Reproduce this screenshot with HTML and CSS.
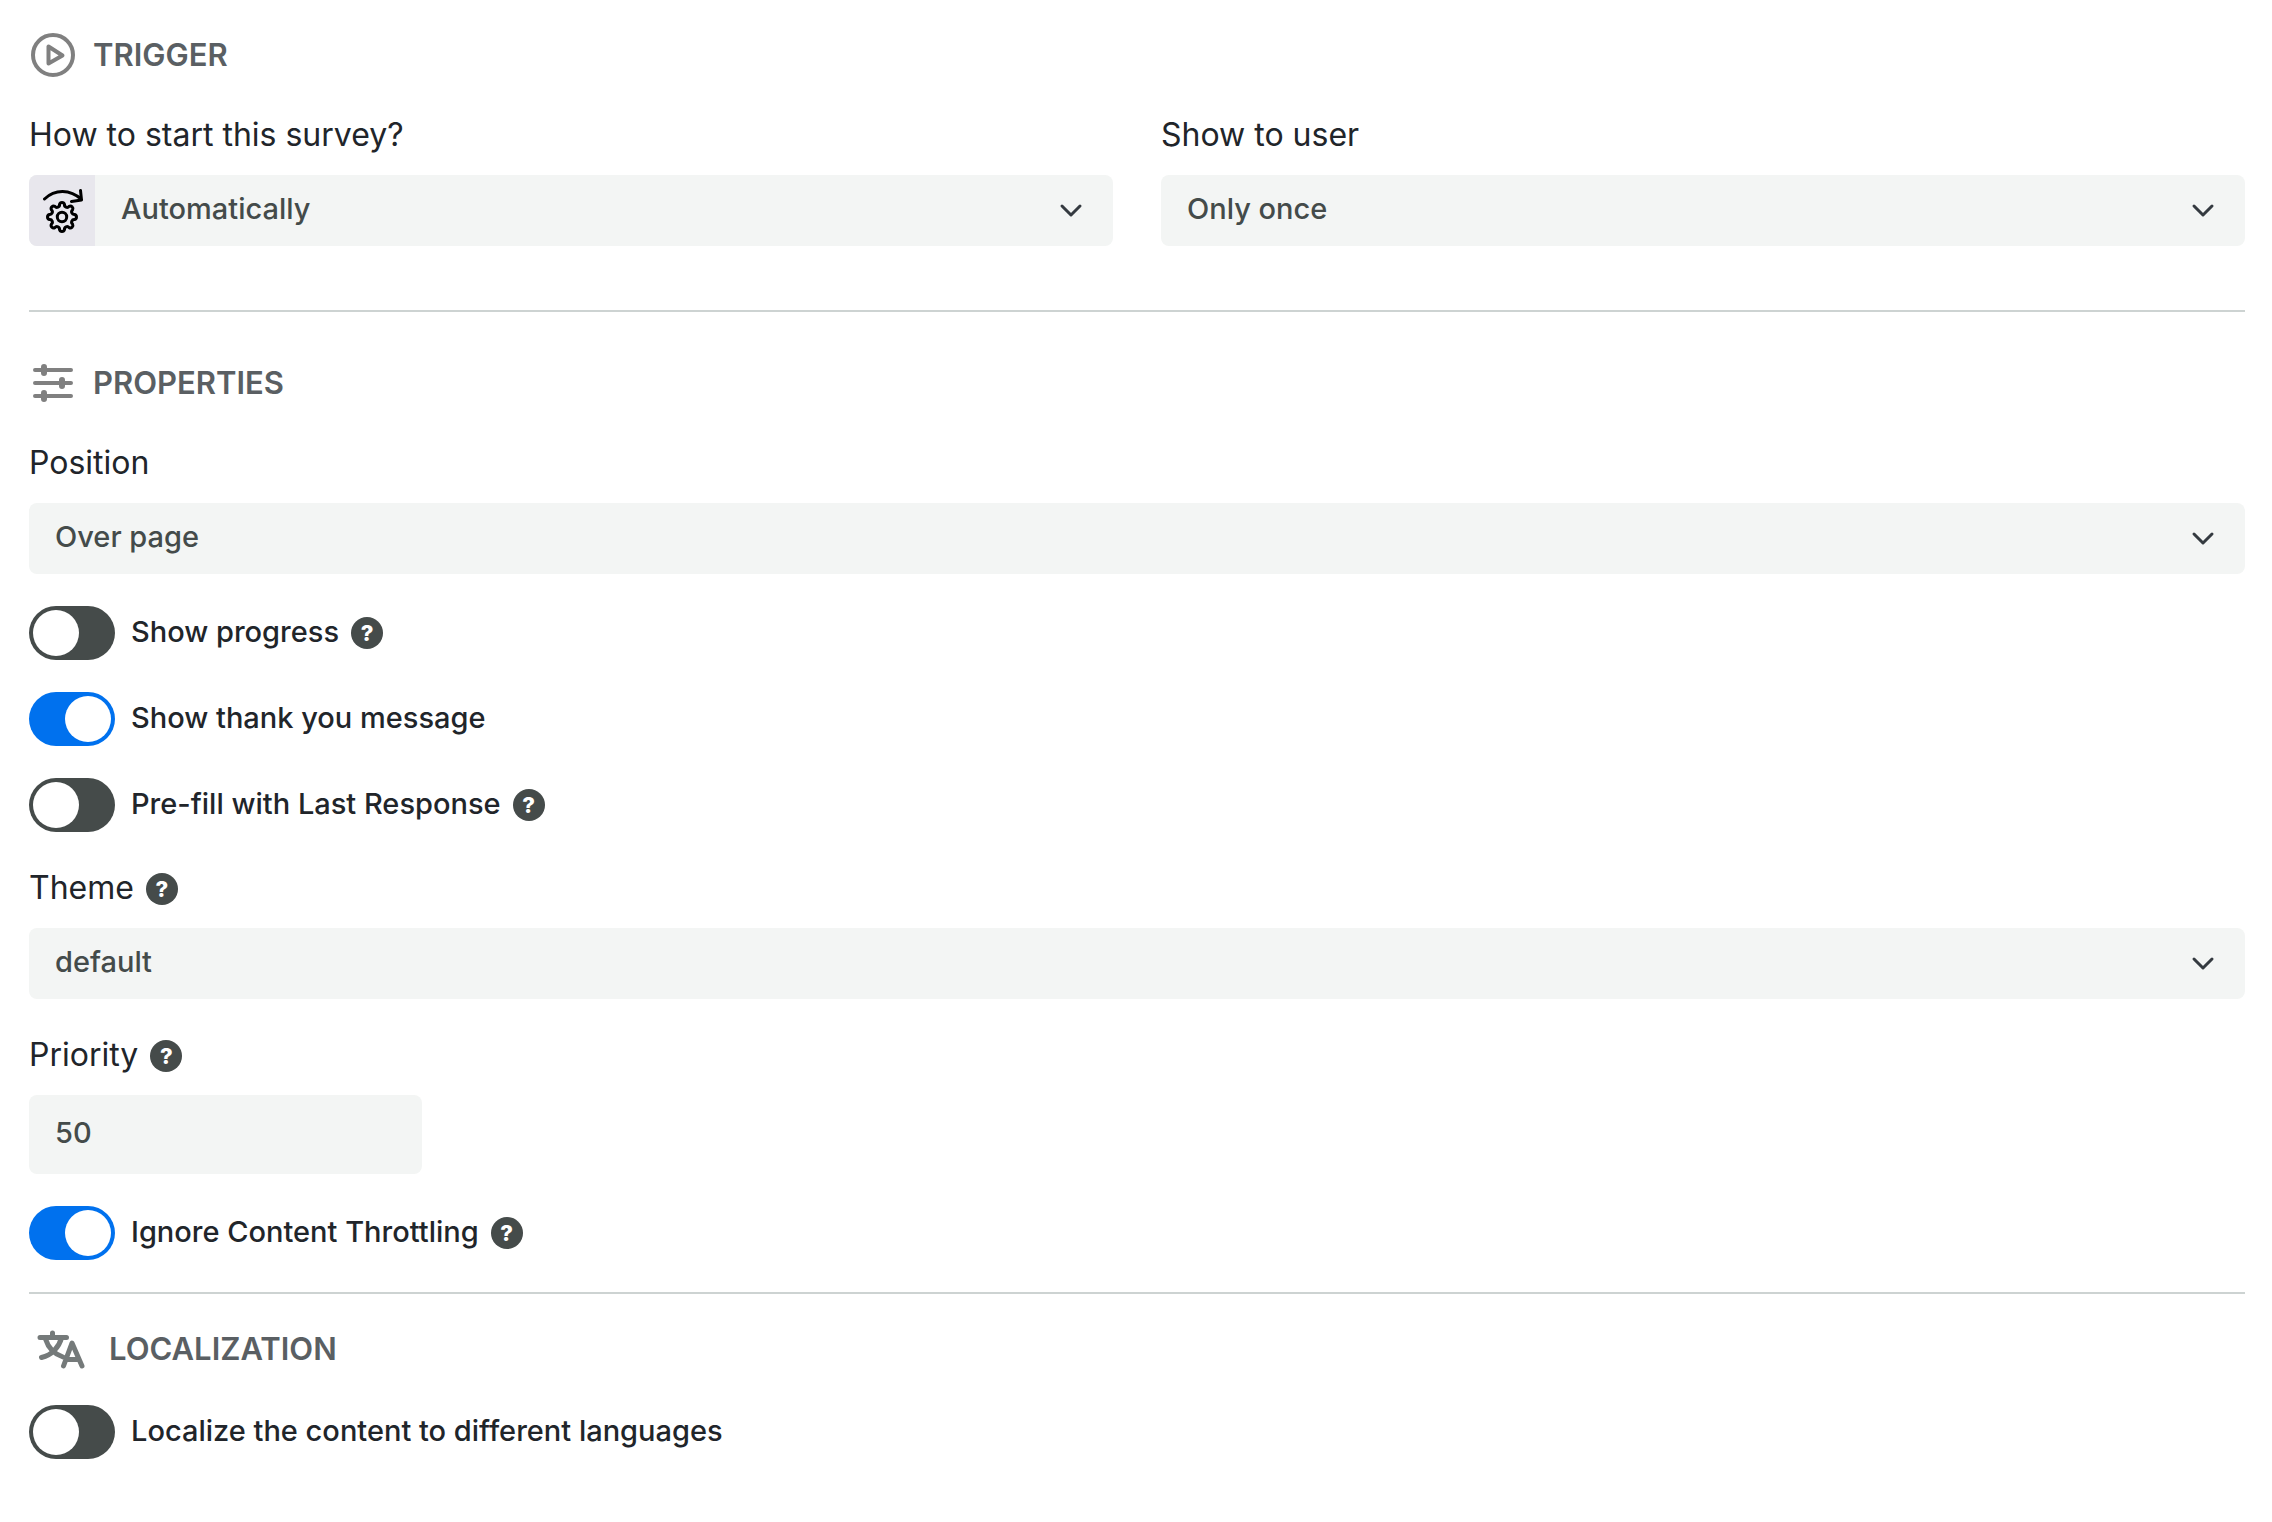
FILE: index.html
```html
<!DOCTYPE html>
<html lang="en">
<head>
    <meta charset="UTF-8">
    <meta name="viewport" content="width=device-width, initial-scale=1.0">
    <title>Survey settings</title>
    <link rel="stylesheet" href="styles.css">
</head>
<body>
    <form class="settings">
        <section class="section trigger">
            <h2 class="section-title">
                <svg class="title-icon" viewBox="11 13 44 44" aria-hidden="true">
                    <circle cx="33" cy="35" r="20"/>
                    <path d="M28.5 26.5v17l14-8z"/>
                </svg>
                <span>Trigger</span>
            </h2>
            <div class="columns">
                <div class="field">
                    <div class="field-label"><label for="startMode">How to start this survey?</label></div>
                    <div class="select-box">
                        <span class="select-prefix">
                            <svg viewBox="21 16 42 48" aria-hidden="true">
                                <path d="M24.5 28C35 18 50 18 61.5 28.5M60.5 19.5l1 9.5-10 1.5"/>
                                <circle cx="42" cy="46" r="4.7"/>
                                <path d="M54.6 48.5A2.6 2.6 0 0 0 52.6 53.1A2.6 2.6 0 0 1 49.1 56.6A2.6 2.6 0 0 0 44.5 58.6A2.6 2.6 0 0 1 39.5 58.6A2.6 2.6 0 0 0 34.9 56.6A2.6 2.6 0 0 1 31.4 53.1A2.6 2.6 0 0 0 29.4 48.5A2.6 2.6 0 0 1 29.4 43.5A2.6 2.6 0 0 0 31.4 38.9A2.6 2.6 0 0 1 34.9 35.4A2.6 2.6 0 0 0 39.5 33.4A2.6 2.6 0 0 1 44.5 33.4A2.6 2.6 0 0 0 49.1 35.4A2.6 2.6 0 0 1 52.6 38.9A2.6 2.6 0 0 0 54.6 43.5A2.6 2.6 0 0 1 54.6 48.5z"/>
                            </svg>
                        </span>
                        <select id="startMode">
                            <option>Automatically</option>
                        </select>
                        <svg class="chevron" viewBox="0 0 24 24" aria-hidden="true"><path d="M3 8l9 9 9-9"/></svg>
                    </div>
                </div>
                <div class="field">
                    <div class="field-label"><label for="frequency">Show to user</label></div>
                    <div class="select-box">
                        <select id="frequency">
                            <option>Only once</option>
                        </select>
                        <svg class="chevron" viewBox="0 0 24 24" aria-hidden="true"><path d="M3 8l9 9 9-9"/></svg>
                    </div>
                </div>
            </div>
        </section>

        <section class="section properties">
            <h2 class="section-title">
                <svg class="title-icon" viewBox="11 11 44 44" aria-hidden="true">
                    <path d="M15 20h36M15 33h36M15 46h36"/>
                    <path class="knob" d="M24 17v6M42 30v6M24 43v6"/>
                </svg>
                <span>Properties</span>
            </h2>
            <div class="stack">
                <div class="field">
                    <div class="field-label"><label for="position">Position</label></div>
                    <div class="select-box">
                        <select id="position">
                            <option>Over page</option>
                        </select>
                        <svg class="chevron" viewBox="0 0 24 24" aria-hidden="true"><path d="M3 8l9 9 9-9"/></svg>
                    </div>
                </div>
                <div class="switch-row">
                    <input class="switch" type="checkbox" id="showProgress">
                    <label for="showProgress">Show progress</label>
                    <button class="help" type="button">?</button>
                </div>
                <div class="switch-row">
                    <input class="switch" type="checkbox" id="showThanks" checked>
                    <label for="showThanks">Show thank you message</label>
                </div>
                <div class="switch-row">
                    <input class="switch" type="checkbox" id="prefill">
                    <label for="prefill">Pre-fill with Last Response</label>
                    <button class="help" type="button">?</button>
                </div>
                <div class="field">
                    <div class="field-label">
                        <label for="theme">Theme</label>
                        <button class="help" type="button">?</button>
                    </div>
                    <div class="select-box">
                        <select id="theme">
                            <option>default</option>
                        </select>
                        <svg class="chevron" viewBox="0 0 24 24" aria-hidden="true"><path d="M3 8l9 9 9-9"/></svg>
                    </div>
                </div>
                <div class="field">
                    <div class="field-label">
                        <label for="priority">Priority</label>
                        <button class="help" type="button">?</button>
                    </div>
                    <input class="number-input" type="text" inputmode="numeric" id="priority" value="50">
                </div>
                <div class="switch-row">
                    <input class="switch" type="checkbox" id="ignoreThrottling" checked>
                    <label for="ignoreThrottling">Ignore Content Throttling</label>
                    <button class="help" type="button">?</button>
                </div>
            </div>
        </section>

        <section class="section localization">
            <h2 class="section-title">
                <svg class="title-icon translate" viewBox="17 20 48 40" aria-hidden="true">
                    <path d="M20 28.5h26.5M32.5 24v4M41.5 29C39 38 32 46 21.5 48.5M25.5 30C28 38 34 45 43 48"/>
                    <path d="M43.5 57l8.5-23 10 23M47 50.5h12"/>
                </svg>
                <span>Localization</span>
            </h2>
            <div class="switch-row">
                <input class="switch" type="checkbox" id="localize">
                <label for="localize">Localize the content to different languages</label>
            </div>
        </section>
    </form>
</body>
</html>
```
FILE: styles.css
```css
* {
    box-sizing: border-box;
}
body {
    margin: 0;
    background-color: #fff;
    color: #21252a;
    font-family: Inter, "Liberation Sans", sans-serif;
    font-size: 29px;
    font-weight: 500;
}
.settings {
    padding: 0 27px 0 29px;
}
.section {
    border-bottom: 2px solid #cdd3d2;
}
.section-title {
    display: flex;
    align-items: center;
    gap: 18px;
    height: 44px;
    margin: 0 0 34px 2px;
    color: #5a5f63;
    font-size: 31px;
    font-weight: 600;
    text-transform: uppercase;
}
.section-title span {
    padding-bottom: 2px;
}
.title-icon {
    width: 44px;
    height: 44px;
    fill: none;
    stroke: #808080;
    stroke-width: 4;
    stroke-linecap: round;
    stroke-linejoin: round;
}
.title-icon .knob {
    stroke-width: 6;
}
.trigger {
    padding: 33px 0 64px;
}
.properties {
    padding: 49px 0 32px;
}
.localization {
    padding-top: 33px;
    border-bottom: none;
}
.localization .section-title {
    gap: 24px;
    margin-left: 8px;
}
.translate {
    width: 48px;
    height: 40px;
    stroke: #757a7a;
    stroke-width: 5;
}
.columns {
    display: grid;
    grid-template-columns: 1fr 1fr;
    gap: 48px;
}
.stack {
    display: flex;
    flex-direction: column;
    gap: 32px;
}
.field-label {
    display: flex;
    align-items: center;
    gap: 12px;
    height: 50px;
    margin-bottom: 14px;
    font-size: 32px;
    font-weight: 400;
}
.field-label label {
    padding-bottom: 4px;
}
.select-box {
    display: flex;
    position: relative;
    height: 71px;
    border-radius: 8px;
    background-color: #f3f5f4;
    overflow: hidden;
}
.select-prefix {
    display: flex;
    align-items: center;
    justify-content: center;
    width: 66px;
    background-color: #e8e7ed;
}
.select-prefix svg {
    width: 42px;
    height: 48px;
    fill: none;
    stroke: #000;
    stroke-width: 3;
    stroke-linecap: round;
    stroke-linejoin: round;
}
select {
    flex: 1;
    padding: 0 64px 4px 26px;
    border: none;
    background: none;
    color: #444b4a;
    font: inherit;
    appearance: none;
}
.chevron {
    position: absolute;
    top: 23px;
    right: 30px;
    width: 24px;
    height: 24px;
    fill: none;
    stroke: #343a40;
    stroke-width: 3;
    stroke-linecap: round;
    stroke-linejoin: round;
    pointer-events: none;
}
.number-input {
    display: block;
    width: 393px;
    max-width: 100%;
    height: 79px;
    padding: 0 26px 4px;
    border: none;
    border-radius: 8px;
    background-color: #f3f5f4;
    color: #444b4a;
    font: inherit;
}
.switch-row {
    display: flex;
    align-items: center;
    height: 54px;
}
.switch-row label {
    margin: 0 12px 0 16px;
    padding-bottom: 4px;
}
.switch {
    flex: none;
    width: 86px;
    height: 54px;
    margin: 0;
    padding: 4px;
    border-radius: 27px;
    background-color: #454b4a;
    appearance: none;
    cursor: pointer;
}
.switch::before {
    content: "";
    display: block;
    width: 46px;
    height: 46px;
    border-radius: 50%;
    background-color: #fff;
}
.switch:checked {
    background-color: #0071ee;
}
.switch:checked::before {
    margin-left: auto;
}
.help {
    width: 32px;
    height: 32px;
    padding: 0;
    border: none;
    border-radius: 50%;
    background-color: #454b4a;
    color: #fff;
    font-family: inherit;
    font-size: 22px;
    font-weight: 800;
    line-height: 32px;
    cursor: pointer;
}
```
